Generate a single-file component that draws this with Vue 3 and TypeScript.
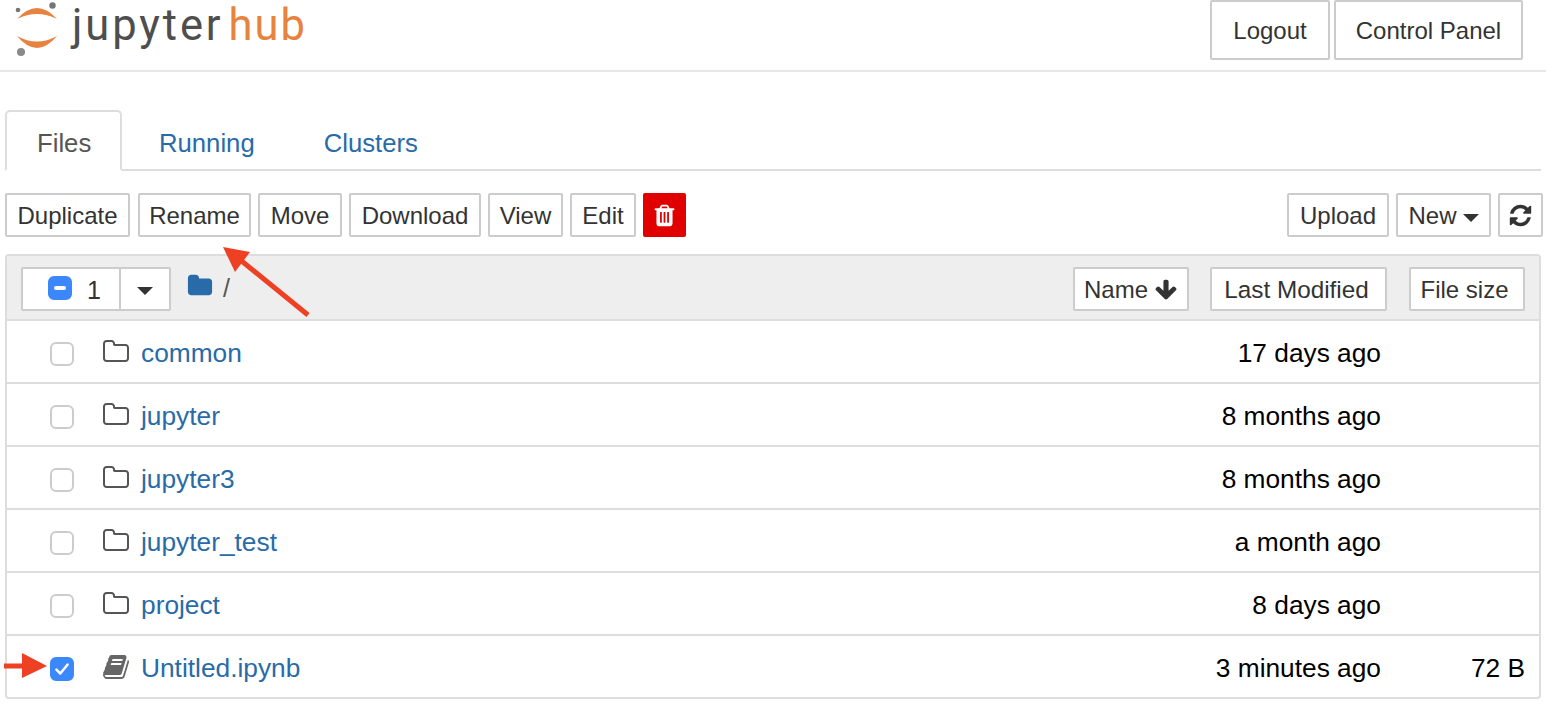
<script setup lang="ts">
interface Row { name: string; modified: string; size?: string; notebook?: boolean; checked?: boolean }
const rows: Row[] = [
  { name: 'common', modified: '17 days ago' },
  { name: 'jupyter', modified: '8 months ago' },
  { name: 'jupyter3', modified: '8 months ago' },
  { name: 'jupyter_test', modified: 'a month ago' },
  { name: 'project', modified: '8 days ago' },
  { name: 'Untitled.ipynb', modified: '3 minutes ago', size: '72 B', notebook: true, checked: true },
]
const actions = [
  { label: 'Duplicate', width: 125 },
  { label: 'Rename', width: 113 },
  { label: 'Move', width: 84 },
  { label: 'Download', width: 132 },
  { label: 'View', width: 75 },
  { label: 'Edit', width: 66 },
]
const folderO = 'M1600 1312v-704q0-40-28-68t-68-28h-704q-40 0-68-28t-28-68v-64q0-40-28-68t-68-28h-320q-40 0-68 28t-28 68v960q0 40 28 68t68 28h1216q40 0 68-28t28-68zm128-704v704q0 92-66 158t-158 66h-1216q-92 0-158-66t-66-158v-960q0-92 66-158t158-66h320q92 0 158 66t66 158v32h672q92 0 158 66t66 158z'
const book = 'M1703 478q40 57 18 129l-275 906q-19 64-76.5 107.5t-122.5 43.5h-923q-77 0-148.5-53.5t-99.5-131.5q-24-67-2-127 0-4 3-27t4-37q1-8-3-21.5t-3-19.5q2-11 8-21t16.5-23.5 16.5-23.5q23-38 45-91.5t30-91.5q3-10 .5-30t-.5-28q3-11 17-28t17-23q21-36 42-92t25-90q1-9-2.5-32t.5-28q4-13 22-30.5t22-22.5q19-26 42.5-84.5t27.5-96.5q1-8-3-25.5t-2-26.5q2-8 9-18t18-23 17-21q8-12 16.5-30.5t15-35 16-36 19.5-32 26.5-23.5 36-11.5 47.5 5.5l-1 3q38-9 51-9h761q74 0 114 56t18 130l-274 906q-36 119-71.5 153.5t-128.5 34.5h-869q-27 0-38 15-11 16-1 43 24 70 144 70h923q29 0 56-15.5t35-41.5l300-987q7-22 5-57 38 15 59 43zm-1064 2q-4 13 2 22.5t20 9.5h608q13 0 25.5-9.5t16.5-22.5l21-64q4-13-2-22.5t-20-9.5h-608q-13 0-25.5 9.5t-16.5 22.5zm-83 256q-4 13 2 22.5t20 9.5h608q13 0 25.5-9.5t16.5-22.5l21-64q4-13-2-22.5t-20-9.5h-608q-13 0-25.5 9.5t-16.5 22.5z'
</script>

<template>
  <div class="page">
    <header class="header">
      <div class="logo">
        <svg class="mark" width="60" height="60" viewBox="0 0 60 60">
          <path d="M17 19 Q37 -3 57 19 Q37 9 17 19Z" fill="#e8833f" />
          <path d="M17 36 Q37 60 57 36 Q37 47 17 36Z" fill="#e8833f" />
          <circle cx="52.500" cy="5.500" r="3.200" fill="#767677" />
          <circle cx="18" cy="10" r="2.300" fill="#767677" />
          <circle cx="21" cy="52" r="4" fill="#8a8a8b" />
        </svg>
        <span class="logo-text">jupyter<span class="hub">hub</span></span>
      </div>
      <div class="header-buttons">
        <button class="btn big logout">Logout</button>
        <button class="btn big cp">Control Panel</button>
      </div>
    </header>

    <nav class="tabs">
      <a class="tab active">Files</a>
      <a class="tab">Running</a>
      <a class="tab">Clusters</a>
    </nav>

    <div class="toolbar">
      <div class="group actions">
        <button v-for="a in actions" :key="a.label" class="btn" :style="{ width: a.width + 'px' }">{{ a.label }}</button>
        <button class="btn danger" aria-label="Delete">
          <svg width="25" height="25" viewBox="0 0 1792 1792"><path fill="#fff" d="M704 1376v-704q0-14-9-23t-23-9h-64q-14 0-23 9t-9 23v704q0 14 9 23t23 9h64q14 0 23-9t9-23zm256 0v-704q0-14-9-23t-23-9h-64q-14 0-23 9t-9 23v704q0 14 9 23t23 9h64q14 0 23-9t9-23zm256 0v-704q0-14-9-23t-23-9h-64q-14 0-23 9t-9 23v704q0 14 9 23t23 9h64q14 0 23-9t9-23zm-544-992h448l-48-117q-7-9-17-11h-317q-10 2-17 11zm928 32v64q0 14-9 23t-23 9h-96v948q0 83-47 143.500t-113 60.500h-832q-66 0-113-58.500t-47-141.500v-952h-96q-14 0-23-9t-9-23v-64q0-14 9-23t23-9h309l70-167q15-37 54-63t79-26h320q40 0 79 26t54 63l70 167h309q14 0 23 9t9 23z"/></svg>
        </button>
      </div>
      <div class="group">
        <button class="btn upload">Upload</button>
        <button class="btn new">New <span class="caret small"></span></button>
        <button class="btn icon-btn" aria-label="Refresh">
          <svg width="25" height="25" viewBox="0 0 1792 1792"><path fill="#333" d="M1639 1056q0 5-1 7-64 268-268 434.500t-478 166.500q-146 0-282.500-55t-243.500-157l-129 129q-19 19-45 19t-45-19-19-45v-448q0-26 19-45t45-19h448q26 0 45 19t19 45-19 45l-137 137q71 66 161 102t187 36q134 0 250-65t186-179q11-17 53-117 8-23 30-23h192q13 0 22.500 9.500t9.500 22.500zm25-800v448q0 26-19 45t-45 19h-448q-26 0-45-19t-19-45 19-45l138-138q-148-137-349-137-134 0-250 65t-186 179q-11 17-53 117-8 23-30 23h-199q-13 0-22.500-9.500t-9.500-22.500v-7q65-268 270-434.500t480-166.500q146 0 284 55.500t245 156.500l130-129q19-19 45-19t45 19 19 45z"/></svg>
        </button>
      </div>
    </div>

    <section class="list">
      <div class="list-head">
        <div class="select-group">
          <div class="select-main">
            <span class="check minus"><span class="dash"></span></span>
            <span class="count">1</span>
          </div>
          <div class="select-drop"><span class="caret"></span></div>
        </div>
        <svg class="crumb-icon" width="26" height="26" viewBox="0 0 1792 1792"><path fill="#286ba8" d="M1728 608v704q0 92-66 158t-158 66h-1216q-92 0-158-66t-66-158v-960q0-92 66-158t158-66h320q92 0 158 66t66 158v32h672q92 0 158 66t66 158z"/></svg>
        <span class="slash">/</span>
        <div class="sorters">
          <button class="btn name-sort">Name
            <svg width="24" height="24" viewBox="0 0 1792 1792"><path fill="#333" d="M1675 832q0 53-37 90l-651 652q-39 37-91 37-53 0-90-37l-651-652q-38-36-38-90 0-53 38-91l74-75q39-37 91-37 53 0 90 37l294 294v-704q0-52 38-90t90-38h128q52 0 90 38t38 90v704l294-294q37-37 90-37 52 0 91 37l75 75q37 39 37 91z"/></svg>
          </button>
          <button class="btn mod-sort">Last Modified</button>
          <button class="btn size-sort">File size</button>
        </div>
      </div>
      <div v-for="r in rows" :key="r.name" class="row">
        <span v-if="r.checked" class="check on">
          <svg width="18" height="18" viewBox="0 0 16 16"><path d="M3 8.500 L6.500 12 L13 4" fill="none" stroke="#fff" stroke-width="2.200" stroke-linecap="round" stroke-linejoin="round"/></svg>
        </span>
        <span v-else class="check"></span>
        <svg class="row-icon" width="28" height="28" viewBox="0 0 1792 1792"><path :fill="r.notebook ? '#666' : '#555'" :d="r.notebook ? book : folderO"/></svg>
        <a class="name">{{ r.name }}</a>
        <span class="modified">{{ r.modified }}</span>
        <span class="size">{{ r.size }}</span>
      </div>
    </section>

    <svg class="arrows" width="1546" height="704" viewBox="0 0 1546 704">
      <path d="M308 315 L238 258" stroke="#ee4023" stroke-width="5" fill="none"/>
      <path d="M223 247 L250 252 L235 272Z" fill="#ee4023"/>
      <path d="M4 666 L26 666" stroke="#ee4023" stroke-width="5" fill="none"/>
      <path d="M22 653 L47 666 L22 678Z" fill="#ee4023"/>
    </svg>
  </div>
</template>

<style>
body { margin: 0; background: #fff; }
</style>

<style scoped>
.page {
  position: relative;
  width: 1546px;
  height: 704px;
  overflow: hidden;
  background: #fff;
  font-family: "Liberation Sans", Arial, sans-serif;
  font-size: 26.300px;
  color: #000;
}
.btn {
  box-sizing: border-box;
  height: 44px;
  padding: 2px 0 0;
  background: #fff;
  border: 2px solid #ccc;
  border-radius: 2px;
  font: inherit;
  font-size: 24px;
  color: #333;
  display: inline-flex;
  align-items: center;
  justify-content: center;
  white-space: nowrap;
}
.header {
  box-sizing: border-box;
  height: 72px;
  border-bottom: 2px solid #e7e7e7;
  display: flex;
  justify-content: space-between;
  padding-right: 23px;
}
.logo { position: relative; width: 400px; }
.mark { position: absolute; left: 0; top: 0; }
.logo-text {
  position: absolute;
  left: 72px;
  top: 0;
  font-family: Roboto, sans-serif;
  font-size: 43.500px;
  color: #4e4e4e;
  letter-spacing: 2.900px;
}
.hub { color: #e8833f; margin-left: 5px; letter-spacing: 2px; }
.header-buttons { display: flex; gap: 4px; align-items: flex-start; }
.btn.big { height: 60px; }
.logout { width: 120px; }
.cp { width: 189px; }
.tabs {
  box-sizing: border-box;
  height: 61px;
  margin: 38px 5px 0;
  border-bottom: 2px solid #ddd;
  display: flex;
  font-size: 25.700px;
}
.tab {
  box-sizing: border-box;
  height: 61px;
  padding: 0 32px;
  line-height: 66px;
  color: #286ba8;
  margin-right: 5px;
}
.tab.active {
  width: 117px;
  color: #555;
  background: #fff;
  border: 2px solid #ddd;
  border-bottom-color: #fff;
  border-radius: 5px 5px 0 0;
  padding: 0 0 0 30px;
  line-height: 62px;
}
.toolbar {
  display: flex;
  justify-content: space-between;
  margin: 22px 3px 0 5px;
}
.group { display: flex; gap: 7px; }
.actions > .btn:first-child { margin-right: 1px; }
.danger {
  width: 43px;
  padding: 0;
  background: #e00000;
  border-color: #e00000;
}
.upload { width: 102px; }
.new { width: 95px; }
.icon-btn { width: 45px; padding: 0; }
.caret {
  display: inline-block;
  width: 0;
  height: 0;
  border-top: 8px solid #333;
  border-left: 8px solid transparent;
  border-right: 8px solid transparent;
  margin-top: 4px;
}
.caret.small { margin-left: 6px; }
.list {
  box-sizing: border-box;
  width: 1536px;
  margin: 17px 0 0 5px;
  border: 2px solid #ddd;
  border-radius: 4px;
}
.list-head {
  box-sizing: border-box;
  height: 65px;
  background: #eee;
  border-bottom: 2px solid #ddd;
  display: flex;
  align-items: center;
  padding: 3px 14px 0 14px;
}
.select-group {
  display: flex;
  box-sizing: border-box;
  height: 44px;
  background: #fff;
  border: 2px solid #ccc;
  border-radius: 2px;
}
.select-main {
  box-sizing: border-box;
  width: 98px;
  border-right: 2px solid #ccc;
  display: flex;
  align-items: center;
  padding-left: 25px;
}
.select-drop {
  width: 48px;
  display: flex;
  align-items: center;
  justify-content: center;
}
.count { margin-left: 15px; color: #333; font-size: 25px; padding-top: 2px; }
.select-main .check { margin-top: -2px; }
.check {
  box-sizing: border-box;
  width: 24px;
  height: 24px;
  flex: none;
  border: 2px solid #ccc;
  border-radius: 6px;
  background: #fff;
  display: inline-flex;
  align-items: center;
  justify-content: center;
}
.check.minus, .check.on { background: #3b88fb; border-color: #3b88fb; }
.dash { width: 12px; height: 4px; border-radius: 2px; background: #fff; }
.crumb-icon { margin: -6px 0 0 16px; }
.slash { margin-left: 10px; color: #555; margin-top: -2px; font-size: 25px; }
.sorters { margin-left: auto; display: flex; gap: 21px; }
.name-sort { width: 116px; gap: 6px; }
.mod-sort { width: 177px; margin-right: 1px; font-size: 24.300px; padding-right: 4px; }
.size-sort { width: 116px; padding-right: 5px; }
.row {
  box-sizing: border-box;
  height: 63px;
  border-bottom: 2px solid #ddd;
  display: flex;
  align-items: center;
  padding: 4px 14px 0 43px;
}
.row:last-child { border-bottom: 0; height: 61px; }
.row-icon { margin: -4px 0 0 28px; }
.name { margin-left: 11px; color: #286ba8; }
.modified { margin-left: auto; }
.size { width: 144px; text-align: right; }
.arrows { position: absolute; left: 0; top: 0; pointer-events: none; }
</style>
